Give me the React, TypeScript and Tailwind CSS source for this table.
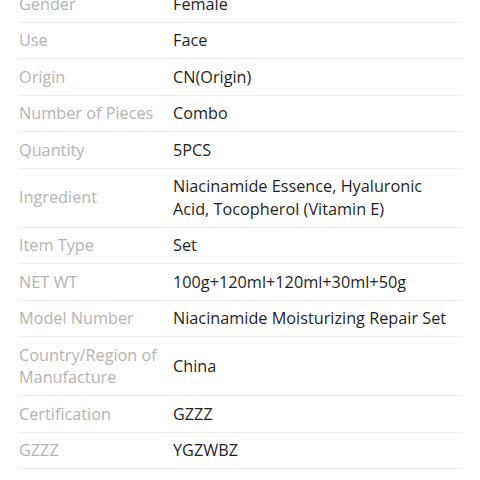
const specs: [string, string][] = [
  ['Gender', 'Female'],
  ['Use', 'Face'],
  ['Origin', 'CN(Origin)'],
  ['Number of Pieces', 'Combo'],
  ['Quantity', '5PCS'],
  ['Ingredient', 'Niacinamide Essence, Hyaluronic Acid, Tocopherol (Vitamin E)'],
  ['Item Type', 'Set'],
  ['NET WT', '100g+120ml+120ml+30ml+50g'],
  ['Model Number', 'Niacinamide Moisturizing Repair Set'],
  ['Country/Region of Manufacture', 'China'],
  ['Certification', 'GZZZ'],
  ['GZZZ', 'YGZWBZ'],
];

export default function App() {
  return (
    <div className="w-[480px] h-[480px] overflow-hidden bg-white font-['Open_Sans',sans-serif] text-[16.25px] leading-[22.5px]">
      <div className="mt-[-14px] pl-[18px] pr-[17px]">
        {specs.map(([label, value]) => (
          <div key={label} className="flex items-center border-b border-[#f0f0f0] py-[6.5px]">
            <div className="w-[155px] shrink-0 pl-[1px] pr-2 text-[#b4b4b4]">{label}</div>
            <div className="flex-1 pr-[6px] text-[#1f1f1f]">{value}</div>
          </div>
        ))}
      </div>
    </div>
  );
}
